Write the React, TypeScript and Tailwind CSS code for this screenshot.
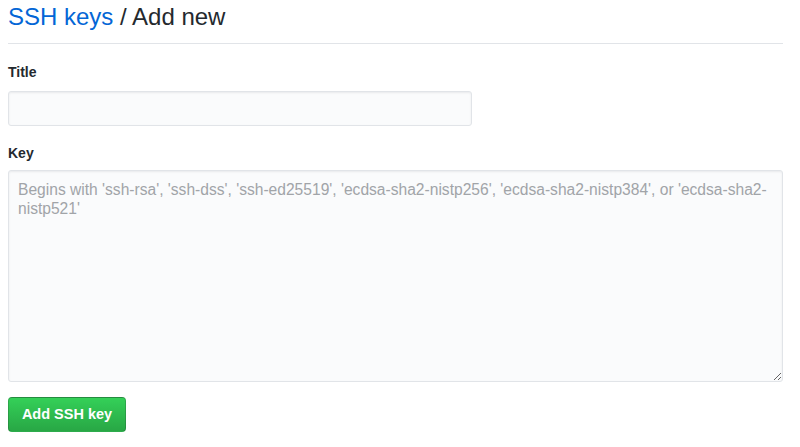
export default function App() {
  return (
    <div className="min-h-screen bg-white pl-2 pr-[17px] text-[#24292e]" style={{ fontFamily: '"Liberation Sans", Arial, sans-serif' }}>
      <div className="flex h-[44px] items-start border-b border-[#e1e4e8]">
        <h2 className="mt-[2px] text-[24px] font-normal leading-[30px]">
          <a href="#" className="text-[#0366d6]">SSH keys</a> / Add new
        </h2>
      </div>
      <form className="pt-[18px]" onSubmit={(e) => e.preventDefault()}>
        <label className="block text-[14px] font-bold leading-[21px]">Title</label>
        <input
          type="text"
          className="mt-[8px] block h-[35px] w-[464px] rounded-[3px] border border-[#e1e4e8] bg-[#fafbfc] px-2 text-[14px] shadow-[inset_0_1px_2px_rgba(27,31,35,0.075)] outline-none"
        />
        <label className="mt-[17px] block text-[14px] font-bold leading-[21px]">Key</label>
        <textarea
          placeholder={"Begins with 'ssh-rsa', 'ssh-dss', 'ssh-ed25519', 'ecdsa-sha2-nistp256', 'ecdsa-sha2-nistp384', or 'ecdsa-sha2-\nnistp521'"}
          className="mt-[6px] block h-[212px] w-full resize rounded-[3px] border border-[#e1e4e8] bg-[#fafbfc] pl-[9px] pr-[4px] py-[9px] text-[15.6px] leading-[19px] shadow-[inset_0_1px_2px_rgba(27,31,35,0.075)] outline-none placeholder:text-[#a1a4a8]"
        />
        <button
          type="submit"
          className="mt-[15px] block h-[35px] w-[118px] rounded-[4px] border border-[rgba(27,31,35,0.2)] bg-gradient-to-b from-[#34d058] to-[#28a745] text-[14.5px] font-bold text-white"
        >
          Add SSH key
        </button>
      </form>
    </div>
  );
}
